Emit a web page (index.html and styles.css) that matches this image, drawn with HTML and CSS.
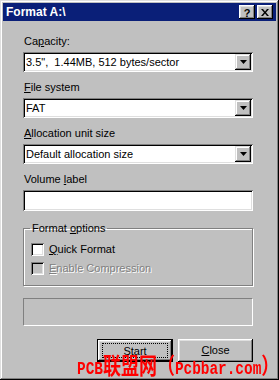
FILE: index.html
```html
<!DOCTYPE html>
<html>
<head>
<meta charset="utf-8">
<link rel="stylesheet" href="styles.css">
</head>
<body>
<div class="window">
  <div class="titlebar">
    <span class="title">Format A:\</span>
    <div class="tbtns">
      <span class="tbtn help">?</span>
      <span class="tbtn close"><svg width="8" height="7" viewBox="0 0 8 7"><path d="M0 0h2l2 2.5L6 0h2L5 3.5 8 7H6L4 4.5 2 7H0l3-3.5z" fill="#000"/></svg></span>
    </div>
  </div>
  <div class="content">
    <div class="field">
      <div class="label">Ca<u>p</u>acity:</div>
      <div class="combo"><span class="val">3.5",&nbsp; 1.44MB, 512 bytes/sector</span><span class="arrow"><svg width="7" height="4" viewBox="0 0 7 4"><path d="M0 0h7L3.5 4z" fill="#000"/></svg></span></div>
    </div>
    <div class="field">
      <div class="label"><u>F</u>ile system</div>
      <div class="combo"><span class="val">FAT</span><span class="arrow"><svg width="7" height="4" viewBox="0 0 7 4"><path d="M0 0h7L3.5 4z" fill="#000"/></svg></span></div>
    </div>
    <div class="field">
      <div class="label"><u>A</u>llocation unit size</div>
      <div class="combo"><span class="val">Default allocation size</span><span class="arrow"><svg width="7" height="4" viewBox="0 0 7 4"><path d="M0 0h7L3.5 4z" fill="#000"/></svg></span></div>
    </div>
    <div class="field">
      <div class="label">Volume <u>l</u>abel</div>
      <div class="textbox"></div>
    </div>
    <fieldset class="group">
      <legend>Format <u>o</u>ptions</legend>
      <div class="check"><span class="box"></span><span><u>Q</u>uick Format</span></div>
      <div class="check disabled"><span class="box"></span><span><u>E</u>nable Compression</span></div>
    </fieldset>
    <div class="progress"></div>
    <div class="buttons">
      <div class="btn default"><span class="focus">Start</span></div>
      <div class="btn"><span class="cap"><u>C</u>lose</span></div>
    </div>
  </div>
  <div class="watermark">PCB<span class="cjk">联盟网（</span>Pcbbar.com<span class="cjk">）</span></div>
</div>
</body>
</html>
```
FILE: styles.css
```css
html, body {
  margin: 0;
  padding: 0;
  background: #c0c0c0;
}
.window {
  position: relative;
  width: 279px;
  height: 380px;
  box-sizing: border-box;
  background: #c0c0c0;
  padding: 3px;
  box-shadow: inset -1px -1px #000, inset 1px 1px #dfdfdf, inset -2px -2px #808080, inset 2px 2px #fff;
  font-family: "Liberation Sans", Arial, sans-serif;
  font-size: 11px;
  color: #000;
  overflow: hidden;
}
.titlebar {
  height: 18px;
  background: #0a1f78;
  display: flex;
  align-items: center;
  justify-content: space-between;
  padding: 0 3px 0 3px;
}
.title {
  color: #fff;
  font-weight: bold;
  font-size: 12px;
  line-height: 14px;
}
.tbtns {
  display: flex;
  gap: 2px;
}
.tbtn {
  width: 16px;
  height: 14px;
  box-sizing: border-box;
  background: #c0c0c0;
  box-shadow: inset -1px -1px #000, inset 1px 1px #fff, inset -2px -2px #808080, inset 2px 2px #dfdfdf;
  display: flex;
  align-items: center;
  justify-content: center;
}
.help {
  font-weight: bold;
  font-size: 11px;
  line-height: 12px;
  padding-top: 1px;
}
.close svg {
  display: block;
}
.content {
  padding: 14px 23px 0 20px;
  display: flex;
  flex-direction: column;
}
.field {
  display: flex;
  flex-direction: column;
  gap: 4px;
  margin-bottom: 9px;
}
.label {
  line-height: 13px;
  padding-left: 1px;
}
.combo, .textbox {
  height: 20px;
  box-sizing: border-box;
  background: #fff;
  box-shadow: inset 1px 1px #808080, inset -1px -1px #fff, inset 2px 2px #000, inset -2px -2px #dfdfdf;
  display: flex;
  align-items: center;
  padding: 2px;
}
.textbox {
  height: 21px;
}
.val {
  flex: 1;
  padding-left: 1px;
  line-height: 14px;
  white-space: pre;
}
.arrow {
  width: 16px;
  height: 16px;
  box-sizing: border-box;
  background: #c0c0c0;
  box-shadow: inset -1px -1px #000, inset 1px 1px #dfdfdf, inset -2px -2px #808080, inset 2px 2px #fff;
  display: flex;
  align-items: center;
  justify-content: center;
}
.arrow svg {
  display: block;
}
.group {
  margin: 2px 0 0 0;
  padding: 8px 0 10px 7px;
  border: 1px solid #808080;
  box-shadow: inset 1px 1px #fff, 1px 1px #fff;
  display: flex;
  flex-direction: column;
  gap: 6px;
}
.group legend {
  padding: 0 2px;
  margin-left: -1px;
  line-height: 13px;
}
.check {
  display: flex;
  align-items: center;
  gap: 5px;
  line-height: 13px;
}
.box {
  width: 13px;
  height: 13px;
  box-sizing: border-box;
  background: #fff;
  box-shadow: inset 1px 1px #808080, inset -1px -1px #fff, inset 2px 2px #000, inset -2px -2px #dfdfdf;
}
.disabled .box {
  background: #c0c0c0;
}
.disabled {
  color: #808080;
  text-shadow: 1px 1px 0 #fff;
}
.progress {
  margin-top: 12px;
  height: 28px;
  box-sizing: border-box;
  border: 1px solid;
  border-color: #808080 #fff #fff #808080;
}
.buttons {
  margin-top: 13px;
  display: flex;
  justify-content: flex-end;
  gap: 5px;
}
.btn {
  width: 75px;
  height: 23px;
  box-sizing: border-box;
  background: #c0c0c0;
  box-shadow: inset -1px -1px #000, inset 1px 1px #fff, inset -2px -2px #808080, inset 2px 2px #dfdfdf;
  display: flex;
  align-items: center;
  justify-content: center;
  line-height: 13px;
}
.btn.default {
  width: 76px;
  border: 1px solid #000;
}
.focus {
  display: block;
  box-sizing: border-box;
  width: 66px;
  height: 15px;
  padding-top: 1px;
  text-align: center;
  border: 1px dotted #000;
}
.watermark {
  position: absolute;
  left: 77px;
  top: 353px;
  color: #f00;
  font-family: "Liberation Mono", "Noto Sans CJK SC", monospace;
  font-weight: bold;
  font-size: 14.4px;
  line-height: 19px;
  white-space: nowrap;
  transform: scaleY(1.25);
  transform-origin: left top;
}
.watermark .cjk {
  font-family: "Noto Sans CJK SC", sans-serif;
  font-size: 18px;
}
```
